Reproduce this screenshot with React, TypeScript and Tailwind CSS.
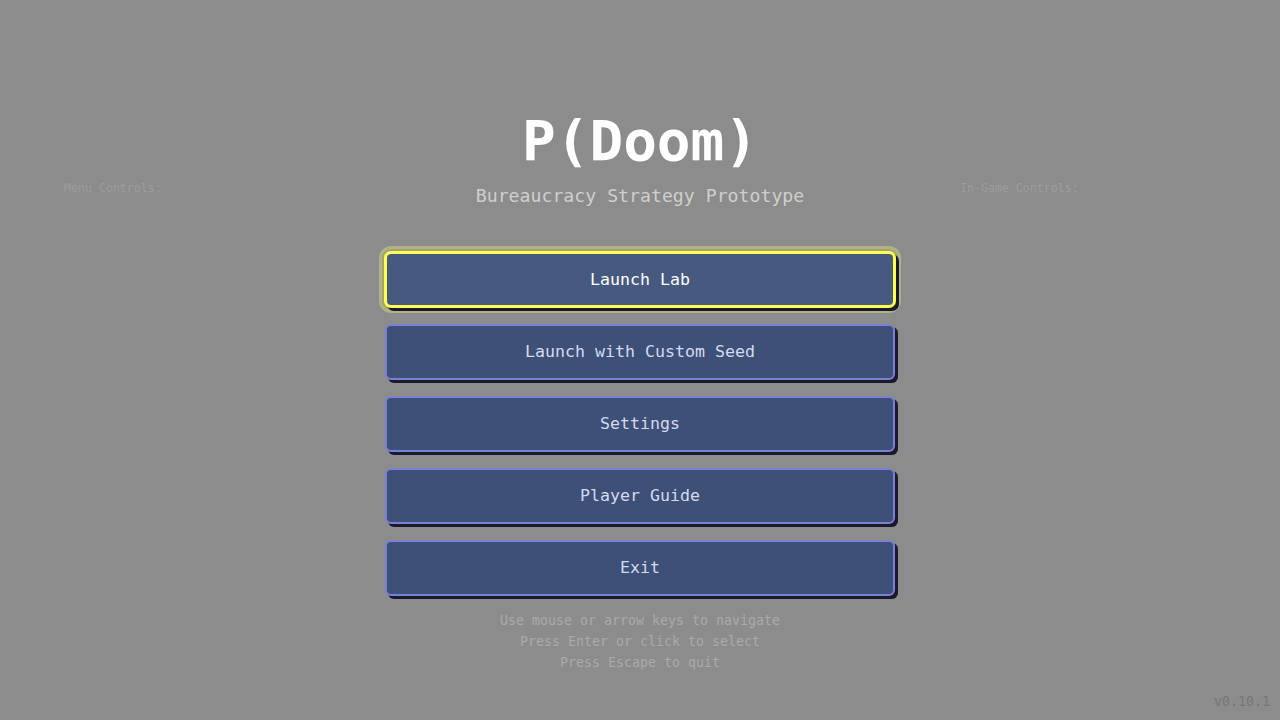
import React from "react";

const items = [
  "Launch Lab",
  "Launch with Custom Seed",
  "Settings",
  "Player Guide",
  "Exit",
];

function MenuButton({ label, selected }: { label: string; selected: boolean }) {
  if (selected) {
    return (
      <button className="flex h-[57px] w-[512px] items-center justify-center rounded-[7px] border-[3px] border-[#ffff55] bg-[#465a80] pt-px text-[16.6px] text-white shadow-[3px_3px_0_#1a1a28,0_0_0_2px_#a3a36a,0_0_0_5px_#b0b08a]">
        {label}
      </button>
    );
  }
  return (
    <button className="flex h-[56px] w-[510px] items-center justify-center rounded-[6px] border-2 border-[#7b80d6] bg-[#3c5078] text-[16.6px] text-[#d6daf0] shadow-[3px_3px_0_#1a1a2c]">
      {label}
    </button>
  );
}

export default function App() {
  return (
    <div
      className="flex h-[720px] w-full flex-col bg-[#8c8c8c]"
      style={{ fontFamily: '"DejaVu Sans Mono", monospace' }}
    >
      <h1 className="pt-[113px] text-center text-[56px] font-bold leading-[56px] text-white">
        P(Doom)
      </h1>
      <div className="mt-[12px] grid grid-cols-[320px_640px_320px] items-start">
        <div className="pl-16 text-[11.6px] leading-[14px] text-[#9c9c9c]">
          Menu Controls:
        </div>
        <div className="pt-[6px] text-center text-[18.2px] leading-[18px] text-[#cfcfcf]">
          Bureaucracy Strategy Prototype
        </div>
        <div className="text-[11.6px] leading-[14px] text-[#9c9c9c]">
          In-Game Controls:
        </div>
      </div>
      <div className="mt-[46px] flex flex-col items-center gap-4">
        {items.map((label, i) => (
          <MenuButton key={label} label={label} selected={i === 0} />
        ))}
      </div>
      <div className="mt-[14px] flex flex-col items-center text-[13.3px] leading-[21px] text-[#aaaaaa]">
        <div>Use mouse or arrow keys to navigate</div>
        <div>Press Enter or click to select</div>
        <div>Press Escape to quit</div>
      </div>
      <div className="mt-auto self-end pb-[8px] pr-[10px] text-[13.3px] leading-[20px] text-[#767676]">
        v0.10.1
      </div>
    </div>
  );
}
